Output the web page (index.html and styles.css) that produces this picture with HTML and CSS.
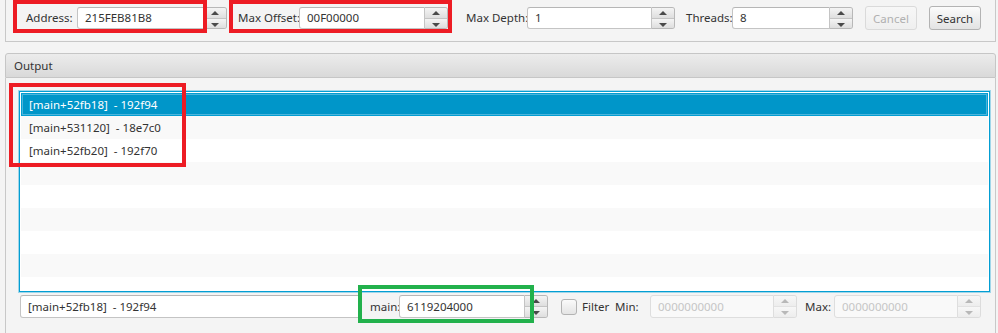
FILE: index.html
```html
<!DOCTYPE html>
<html lang="en">

<head>
  <meta charset="UTF-8" />
  <title>Pointer Search</title>
  <link rel="stylesheet" href="styles.css">
</head>

<body>
  <!-- Search parameters -->
  <div class="toolbar">
    <span class="lbl w-address">Address:</span>
    <div class="spinner w-150">
      <div class="field">215FEB81B8</div>
      <div class="arrows"><span class="up"></span><span class="down"></span></div>
    </div>

    <span class="lbl w-offset gap-11">Max Offset:</span>
    <div class="spinner w-149">
      <div class="field">00F00000</div>
      <div class="arrows"><span class="up"></span><span class="down"></span></div>
    </div>

    <span class="lbl w-depth gap-18">Max Depth:</span>
    <div class="spinner w-148">
      <div class="field">1</div>
      <div class="arrows"><span class="up"></span><span class="down"></span></div>
    </div>

    <span class="lbl w-threads gap-11">Threads:</span>
    <div class="spinner w-121">
      <div class="field">8</div>
      <div class="arrows"><span class="up"></span><span class="down"></span></div>
    </div>

    <button class="btn disabled" disabled>Cancel</button>
    <button class="btn">Search</button>
  </div>

  <!-- Output pane -->
  <div class="titled-pane">
    <div class="pane-title">Output</div>
    <div class="pane-content">
      <div class="list">
        <div class="row selected">[main+52fb18]&nbsp; - 192f94</div>
        <div class="row">[main+531120]&nbsp; - 18e7c0</div>
        <div class="row">[main+52fb20]&nbsp; - 192f70</div>
        <div class="row"></div>
        <div class="row"></div>
        <div class="row"></div>
        <div class="row"></div>
        <div class="row"></div>
        <div class="row"></div>
      </div>

      <div class="bottom-bar">
        <div class="field selected-field">[main+52fb18]&nbsp; - 192f94</div>

        <span class="lbl w-main gap-9">main:</span>
        <div class="spinner w-149">
          <div class="field">6119204000</div>
          <div class="arrows"><span class="up"></span><span class="down"></span></div>
        </div>

        <span class="checkbox"></span>
        <span class="lbl w-filter">Filter</span>
        <span class="lbl w-min">Min:</span>
        <div class="spinner w-147 is-disabled">
          <div class="field">0000000000</div>
          <div class="arrows"><span class="up"></span><span class="down"></span></div>
        </div>

        <span class="lbl w-max gap-8">Max:</span>
        <div class="spinner w-147 is-disabled">
          <div class="field">0000000000</div>
          <div class="arrows"><span class="up"></span><span class="down"></span></div>
        </div>
      </div>
    </div>
  </div>

  <!-- Annotation marks drawn over the screenshot -->
  <div class="mark red mark-address"></div>
  <div class="mark red mark-offset"></div>
  <div class="mark red mark-results"></div>
  <div class="mark green mark-main"></div>
</body>

</html>
```

FILE: styles.css
```css
/* Base */
body {
  margin: 0;
  background-color: #f4f4f4;
  color: #333;
  font-family: 'Noto Sans', 'Open Sans', sans-serif;
  font-size: 11.5px;
  position: relative;
  height: 333px;
  overflow: hidden;
}

/* Top toolbar */
.toolbar {
  display: flex;
  align-items: flex-start;
  height: 35px;
  padding: 6px 0 0 20px;
  margin: 0 2px 0 5px;
  border: 1px solid #c8c8c8;
  border-top: none;
}

.lbl {
  display: inline-block;
  flex: none;
  line-height: 22px;
  white-space: nowrap;
}

.toolbar .lbl {
  margin-top: 1px;
}

.w-address { width: 51px; }
.w-offset { width: 61px; }
.w-depth { width: 61px; }
.w-threads { width: 46px; }
.w-main { width: 29px; }
.w-filter { width: 33px; margin-left: 5px; }
.w-min { width: 35px; }
.w-max { width: 29px; }

.gap-8 { margin-left: 8px; }
.gap-9 { margin-left: 9px; }
.gap-11 { margin-left: 11px; }
.gap-18 { margin-left: 18px; }

/* Spinner */
.spinner {
  display: flex;
  flex: none;
  height: 22px;
}

.toolbar .spinner {
  margin-top: 1px;
}

.w-150 { width: 150px; }
.w-149 { width: 149px; }
.w-148 { width: 148px; }
.w-147 { width: 147px; }
.w-121 { width: 121px; }

.field {
  box-sizing: border-box;
  flex: 1;
  height: 100%;
  padding-left: 7px;
  line-height: 20px;
  background-color: #fff;
  border: 1px solid #c4c4c4;
  border-top-color: #b6b6b6;
  border-radius: 3px 0 0 3px;
  white-space: nowrap;
  overflow: hidden;
}

.arrows {
  box-sizing: border-box;
  width: 23px;
  display: flex;
  flex-direction: column;
  border: 1px solid #b8b8b8;
  border-left: none;
  border-radius: 0 3px 3px 0;
  overflow: hidden;
}

.arrows span {
  flex: 1;
  position: relative;
  background: linear-gradient(#f4f4f4, #dedede);
}

.arrows .up {
  border-bottom: 1px solid #c4c4c4;
}

.arrows span::after {
  content: "";
  position: absolute;
  left: 7px;
  top: 3px;
  border-left: 4px solid transparent;
  border-right: 4px solid transparent;
}

.arrows .up::after {
  border-bottom: 4px solid #4a4a4a;
}

.arrows .down::after {
  top: 4px;
  border-top: 4px solid #4a4a4a;
}

.is-disabled .field {
  color: #c6c6c6;
  background-color: #f9f9f9;
  border-color: #dedede;
}

.is-disabled .arrows {
  border-color: #dcdcdc;
}

.is-disabled .arrows span {
  background: linear-gradient(#f7f7f7, #ededed);
}

.is-disabled .arrows .up {
  border-bottom-color: #e2e2e2;
}

.is-disabled .arrows .up::after {
  border-bottom-color: #b8b8b8;
}

.is-disabled .arrows .down::after {
  border-top-color: #b8b8b8;
}

/* Buttons */
.btn {
  box-sizing: border-box;
  width: 52px;
  height: 24px;
  margin-left: 12px;
  padding: 0;
  font-family: inherit;
  font-size: 11.5px;
  color: #333;
  background: linear-gradient(#fbfbfb, #e3e3e3);
  border: 1px solid #b3b3b3;
  border-radius: 3px;
}

.btn.disabled {
  color: #b0b0b0;
  background: linear-gradient(#f7f7f7, #efefef);
  border-color: #dadada;
}

/* Output pane */
.titled-pane {
  margin: 11px 2px 0 5px;
}

.pane-title {
  height: 23px;
  line-height: 23px;
  padding-left: 8px;
  border: 1px solid #c6c6c6;
  border-radius: 3px 3px 0 0;
  background: linear-gradient(#ececec, #d9d9d9);
}

.pane-content {
  padding: 13px 5px 20px 13px;
  border: 1px solid #c8c8c8;
  border-top: none;
}

.list {
  height: 197px;
  padding: 1px;
  background-color: #fff;
  border: 1px solid #039ed3;
  box-shadow: 0 0 0 1px rgba(3, 158, 211, 0.35);
  overflow: hidden;
}

.row {
  height: 23px;
  line-height: 23px;
  padding-left: 8px;
  white-space: nowrap;
}

.row:nth-child(even) {
  background-color: #f9f9f9;
}

.row.selected {
  color: #fff;
  background-color: #0096c9;
  border: 1px solid #039ed3;
  box-shadow: inset 0 0 0 1px #4cb5dc;
  line-height: 21px;
  height: 21px;
  padding-left: 7px;
}

/* Bottom bar */
.bottom-bar {
  display: flex;
  align-items: center;
  margin-top: 3px;
}

.selected-field {
  flex: none;
  width: 341px;
  height: 23px;
  margin-left: 1px;
  border-radius: 3px;
  line-height: 21px;
}

.bottom-bar .spinner {
  height: 23px;
}

.bottom-bar .field {
  line-height: 21px;
}

.checkbox {
  box-sizing: border-box;
  width: 16px;
  height: 16px;
  margin-left: 13px;
  border: 1px solid #b3b3b3;
  border-radius: 3px;
  background: linear-gradient(#fafafa, #e4e4e4);
}

/* Annotation marks */
.mark {
  position: absolute;
  box-sizing: border-box;
  border: 4px solid;
}

.red { border-color: #ed1c24; }
.green { border-color: #22b14c; }

.mark-address { left: 13px; top: 0; width: 194px; height: 33px; }
.mark-offset { left: 229px; top: 0; width: 223px; height: 33px; }
.mark-results { left: 9px; top: 83px; width: 177px; height: 84px; }
.mark-main { left: 358px; top: 285px; width: 176px; height: 38px; }
```
